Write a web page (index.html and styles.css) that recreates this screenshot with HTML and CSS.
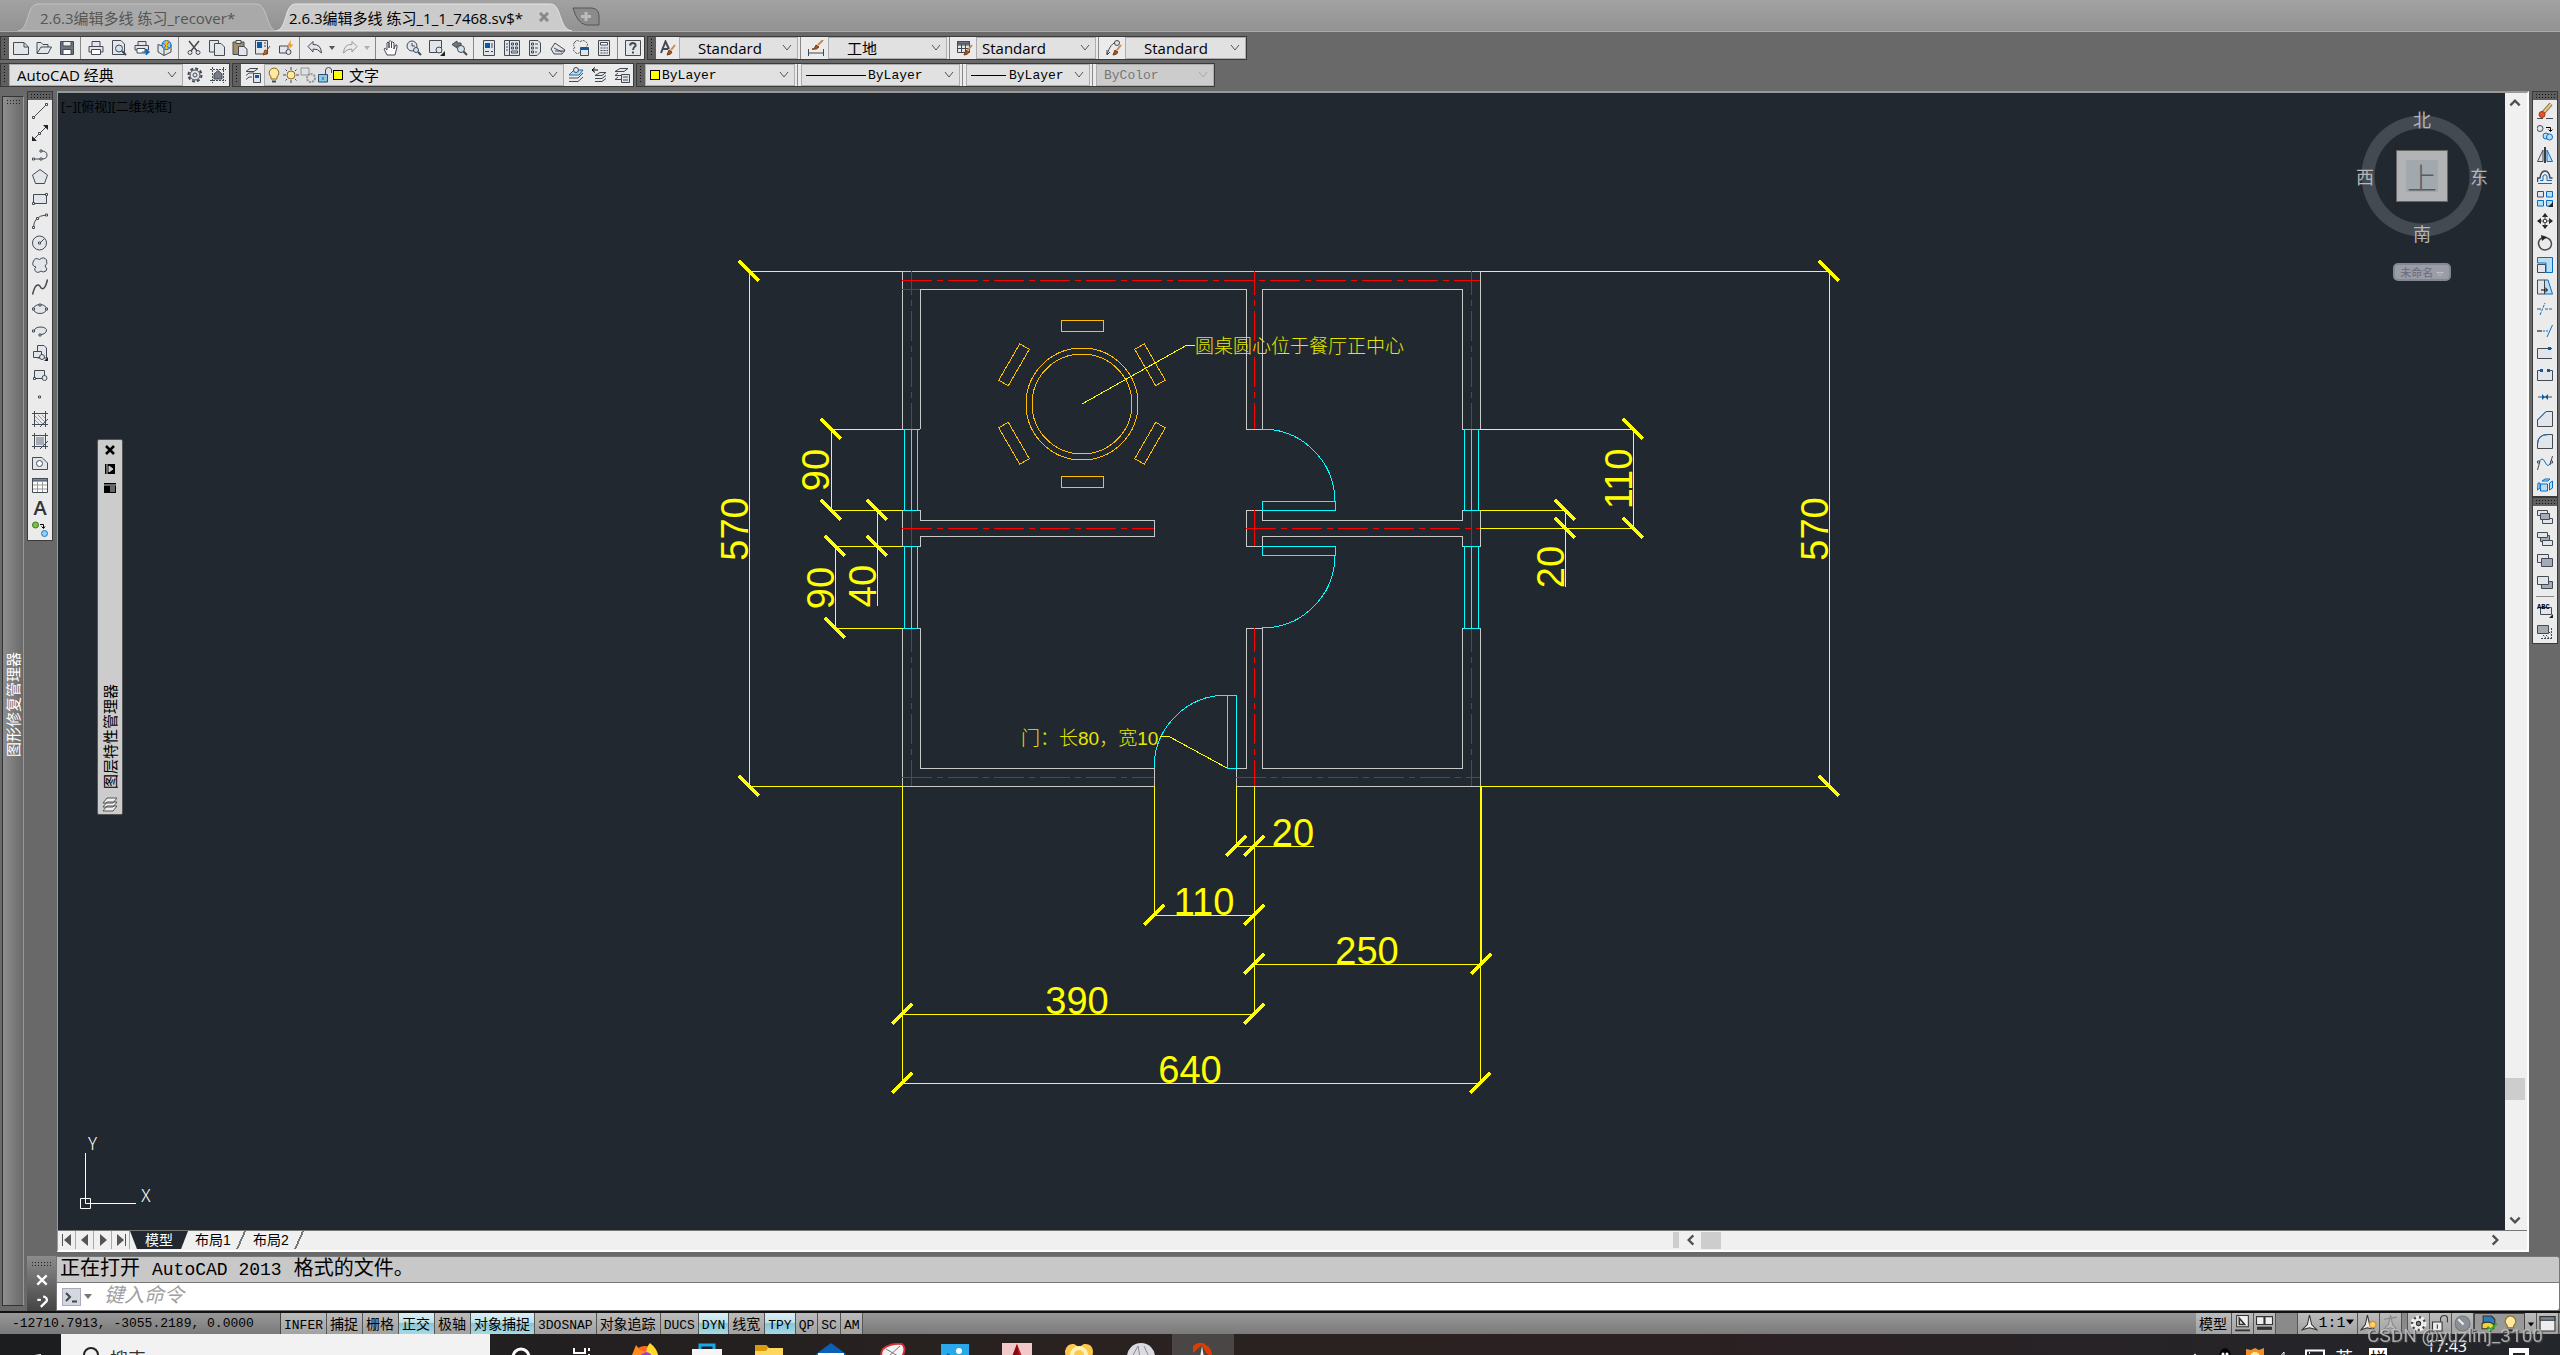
FILE: index.html
```html
<!DOCTYPE html>
<html lang="zh-CN">
<head>
    <meta charset="UTF-8">
    <meta name="viewport" content="width=device-width, initial-scale=1.0">
    <title>AutoCAD 经典</title>
    <link rel="stylesheet" href="styles.css">
</head>
<body>
    <!-- File tabs -->
    <header class="file-tabs">
        <button class="file-tab">
            <svg class="tab-shape" viewBox="0 0 258 28" preserveAspectRatio="none"><path d="M0 28C12 26 8 1 20 1H238C250 1 248 26 258 28Z" fill="#a9a9a9" stroke="#c4c4c4"/></svg>
            <span>2.6.3编辑多线 练习_recover*</span>
        </button>
        <button class="file-tab active">
            <svg class="tab-shape" viewBox="0 0 300 28" preserveAspectRatio="none"><path d="M0 28C12 26 8 1 20 1H278C290 1 286 26 300 28Z" fill="#cbcbcb" stroke="#e6e6e6"/></svg>
            <span>2.6.3编辑多线 练习_1_1_7468.sv$*</span>
            <svg class="tab-close" viewBox="0 0 10 10"><path d="M1 1L9 9M9 1L1 9" stroke="#888" stroke-width="3"/></svg>
        </button>
        <button class="new-tab" aria-label="新建">
            <svg viewBox="0 0 28 20"><path d="M1 1H20Q27 2 27 9V18H14Q5 16 1 1Z" fill="#8b8b8b" stroke="#555"/><path d="M14 5V14M9 9.500H19" stroke="#bbb" stroke-width="3"/></svg>
        </button>
    </header>

    <!-- Toolbars -->
    <div class="toolbars">
        <div class="toolbar-row">
            <div class="toolbar">
                <i class="grip"></i>
                <button aria-label="新建文件"><svg viewBox="0 0 16 16"><path class="f" d="M.5 2.500H11L15.500 7V14.500H.5Z"/><path d="M11 2.500V7H15"/></svg></button>
                <button aria-label="打开"><svg viewBox="0 0 16 16"><path class="f" d="M1 13V2.500H5L7 4.500H12V7"/><path class="f" d="M1 13.500L5 7H15.500L12 13.500Z"/></svg></button>
                <button aria-label="保存"><svg viewBox="0 0 16 16"><path d="M1.500 1.500H14.500V14.500H1.500Z" fill="#6b7480"/><path d="M4 1.500H12V6H4Z" fill="#eee"/><path d="M4 9.500H12V14.500H4Z" fill="#fff"/></svg></button>
                <i class="sep"></i>
                <button aria-label="打印"><svg viewBox="0 0 16 16"><path class="f" d="M4 6V1.500H12V6"/><path class="f" d="M1 6.500H15V12H1Z"/><path d="M3.500 9.500H12.500V14.500H3.500Z" fill="#fff"/></svg></button>
                <button aria-label="打印预览"><svg viewBox="0 0 16 16"><path class="f" d="M1.500 .5H10L13.500 4V14.500H1.500Z"/><circle cx="8" cy="8.500" r="3.500" fill="#cfe3ee"/><path d="M11 11L15 15" stroke-width="2"/></svg></button>
                <button aria-label="发布"><svg viewBox="0 0 16 16"><path class="f" d="M4 5V1.500H12V5M1 5.500H14.500V10H1Z"/><path d="M3 8.500H11V13H3Z" fill="#fff"/><path d="M8 12H12M12 9L15.500 12L12 15Z" fill="#0669c4" stroke="#0669c4"/></svg></button>
                <button aria-label="三维打印"><svg viewBox="0 0 16 16"><path class="f" d="M1 4.500L7 6.500V15.500L1 12ZM7 6.500L14 4.500V12L7 15.500"/><circle cx="9.500" cy="5" r="4.500" fill="#7bcbe8" stroke="#0669c4"/><path d="M6 3L12 8M12 2L7 8" stroke="#d5442a"/><path d="M9.500 .5V9" stroke="#f2c200"/></svg></button>
                <i class="sep"></i>
                <button aria-label="剪切"><svg viewBox="0 0 16 16"><path d="M3 1L11 11M13 1L5 11" stroke-width="1.500"/><circle cx="4" cy="12.500" r="2"/><circle cx="12" cy="12.500" r="2"/></svg></button>
                <button aria-label="复制"><svg viewBox="0 0 16 16"><path class="f" d="M.5 .5H9.500V12H.5Z"/><path class="f" d="M5.500 3.500H12L15.500 7V15.500H5.500Z"/></svg></button>
                <button aria-label="粘贴"><svg viewBox="0 0 16 16"><path d="M1 2H12V14.500H1Z" fill="#a98b66"/><path class="f" d="M4 .5H9V3.500H4ZM6.500 6.500H12L15 9V15.500H6.500Z"/></svg></button>
                <button aria-label="特性匹配"><svg viewBox="0 0 16 16"><path class="f" d="M.5 .5H12.500V14H.5Z"/><path class="bk" d="M2 2H7V8H2Z"/><path d="M9 3H11M9 6H11"/><path d="M8 15L10 10L13 11Q12 15 8 15ZM12 10L15 6" fill="#b86a2c" stroke="#8a4514"/></svg></button>
                <button aria-label="块编辑器"><svg viewBox="0 0 16 16"><path class="f" d="M1.500 6H10V13H1.500Z"/><circle class="f" cx="10.500" cy="12" r="2.500"/><path d="M13 0L9 6H12L10 10L15.500 4.500H12.500Z" fill="#f39a1a" stroke="none"/></svg></button>
                <i class="sep"></i>
                <button aria-label="放弃"><svg viewBox="0 0 16 16"><path class="f" d="M1 6.500L6 1.500V4.500Q14 4 14.500 13Q11 8.500 6 9V12Z"/></svg></button>
                <button class="drop" aria-label="放弃列表"><svg viewBox="0 0 8 16"><path d="M1 6H7L4 10Z" fill="#555" stroke="none"/></svg></button>
                <button class="off" aria-label="重做"><svg viewBox="0 0 16 16"><path d="M15 6.500L10 1.500V4.500Q2 4 1.500 13Q5 8.500 10 9V12Z"/></svg></button>
                <button class="drop off" aria-label="重做列表"><svg viewBox="0 0 8 16"><path d="M1 6H7L4 10Z" fill="#777" stroke="none"/></svg></button>
                <i class="sep"></i>
                <button aria-label="平移"><svg viewBox="0 0 16 16"><path d="M4 15L1 9Q2 7 4 10V3Q5 1 6 3V8V1.500Q7.500 0 8.500 1.500V8V2.500Q10 1 11 3V9L12.500 5Q14.500 4 14 7L12 15Z" fill="#fff"/></svg></button>
                <button aria-label="实时缩放"><svg viewBox="0 0 16 16"><circle class="f" cx="6" cy="6" r="5"/><path d="M6 3V6H9"/><circle cx="10" cy="10" r="2.500" fill="#cfe3ee"/><path d="M12 12L15 15" stroke-width="2"/></svg></button>
                <button aria-label="窗口缩放"><svg viewBox="0 0 16 16"><path class="f" d="M.5 .5H12.500V12.500H.5Z"/><circle class="f" cx="10" cy="10" r="3"/><path class="k" d="M16 11V16H11Z"/></svg></button>
                <button aria-label="缩放上一个"><svg viewBox="0 0 16 16"><path d="M0 4.500L5 1V3H9V6H5V8Z" fill="#777"/><circle cx="9" cy="9" r="3.500" fill="#cfe3ee"/><path d="M11.500 11.500L15 15" stroke-width="2"/></svg></button>
                <i class="sep"></i>
                <button aria-label="特性"><svg viewBox="0 0 16 16"><path class="f" d="M2.500 .5H13.500V15.500H2.500Z"/><path class="bk" d="M4 3H9V8H4Z"/><path d="M4 11.500H8M10 11.500H12M11 3V8"/></svg></button>
                <button aria-label="设计中心"><svg viewBox="0 0 16 16"><path class="f" d="M.5 .5H15.500V15.500H.5Z"/><path d="M5.500 1V15M2 4H4M2 7H4M2 10H4M7.500 3H9.500V5H7.500ZM11.500 3H13.500V5H11.500ZM7.500 7H9.500V9H7.500ZM11.500 7H13.500V9H11.500ZM7.500 11H13.500V13H7.500Z"/></svg></button>
                <button aria-label="工具选项板"><svg viewBox="0 0 16 16"><path class="f" d="M2.500 .5H11L13.500 3V12L10 15.500H2.500Z"/><path d="M4.500 3H6.500V5H4.500ZM4.500 7H6.500V9H4.500ZM4.500 11H6.500V13H4.500ZM8 4H11M8 8H11M8 12H10"/></svg></button>
                <button aria-label="图纸集"><svg viewBox="0 0 16 16"><path class="f" d="M1 9L5 3L15 10L12 14H4Z"/><path d="M4 8L12 12M5 11H15"/></svg></button>
                <button aria-label="标记集"><svg viewBox="0 0 16 16"><path d="M2 2Q4 -1 7 2Q10 -1 13 2Q16 4 13 7M2 2Q-1 5 2 7Q-1 10 2 12Q4 15 7 12" stroke-dasharray="2 1"/><path class="f" d="M7.500 7.500H15.500V15.500H7.500Z"/><path class="bk" d="M7.500 7.500H15.500V10H7.500Z"/></svg></button>
                <button aria-label="计算器"><svg viewBox="0 0 16 16"><path class="f" d="M2.500 .5H13.500V15.500H2.500Z"/><path d="M4.500 2.500H11.500V5H4.500Z" fill="#fff"/><path d="M4.500 8H12M4.500 10.500H12M4.500 13H12" stroke-dasharray="2 1"/></svg></button>
                <i class="sep"></i>
                <button aria-label="帮助"><svg viewBox="0 0 16 16"><path class="f" d="M.5 .5H15.500V15.500H.5Z"/><path d="M5 5.500Q5.500 3 8 3Q11 3.500 10.500 6Q8 7.500 8 10M8 11.500V13.500" stroke-width="2"/></svg></button>
            </div>
            <div class="toolbar">
                <i class="grip"></i>
                <button aria-label="文字样式"><svg viewBox="0 0 16 16"><path d="M1 13L5.500 1.500L9 9M3 9H8" stroke-width="2"/><path d="M7 15L9 10L12 12Q11 15 7 15Z" fill="#a4571f" stroke="#7d3b10"/><path d="M11 10L15 5" stroke="#c98b4a" stroke-width="2"/></svg></button>
                <label class="combo w-text"><select aria-label="文字样式"><option>Standard</option></select><svg viewBox="0 0 10 10"><path d="M1 2L5 7L9 2"/></svg></label>
                <i class="sep"></i>
                <button class="wide" aria-label="标注样式"><svg viewBox="0 0 16 16"><path d="M.5 9V16M15.500 9V16M1 13H15"/><path d="M6 9L8 5L11 7Q9 10 4 9Z" fill="#a4571f" stroke="#7d3b10"/><path d="M10 5L15 0" stroke="#c98b4a" stroke-width="2"/></svg></button>
                <label class="combo w-dim"><select aria-label="标注样式"><option>工地</option></select><svg viewBox="0 0 10 10"><path d="M1 2L5 7L9 2"/></svg></label>
                <i class="sep"></i>
                <button aria-label="表格样式"><svg viewBox="0 0 16 16"><path class="f" d="M.5 1.500H12.500V12.500H.5ZM.5 5H12.500M.5 8.500H12.500M4.500 4V12M8.500 4V12"/><path d="M.5 1.500H12.500V4H.5Z" fill="#6b7480"/><path d="M7 15L9 10L12 12Q11 15 7 15Z" fill="#a4571f" stroke="#7d3b10"/><path d="M11 10L15 5" stroke="#c98b4a" stroke-width="2"/></svg></button>
                <label class="combo w-table"><select aria-label="表格样式"><option>Standard</option></select><svg viewBox="0 0 10 10"><path d="M1 2L5 7L9 2"/></svg></label>
                <i class="sep"></i>
                <button aria-label="多重引线样式"><svg viewBox="0 0 16 16"><circle class="f" cx="11" cy="3" r="2.500"/><path d="M9 3Q5 3 1 14M1 10V15L4 12"/><path d="M7 15L9 10L12 12Q11 15 7 15Z" fill="#a4571f" stroke="#7d3b10"/><path d="M11 10L15 5" stroke="#c98b4a" stroke-width="2"/></svg></button>
                <label class="combo w-leader"><select aria-label="多重引线样式"><option>Standard</option></select><svg viewBox="0 0 10 10"><path d="M1 2L5 7L9 2"/></svg></label>
            </div>
        </div>

        <div class="toolbar-row">
            <div class="toolbar">
                <i class="grip"></i>
                <label class="combo w-space"><select aria-label="工作空间"><option>AutoCAD 经典</option></select><svg viewBox="0 0 10 10"><path d="M1 2L5 7L9 2"/></svg></label>
                <button aria-label="工作空间设置"><svg viewBox="0 0 16 16"><circle cx="8" cy="8" r="6.500" stroke-width="2" stroke-dasharray="3 2"/><circle class="f" cx="8" cy="8" r="5"/><circle cx="8" cy="8" r="2"/></svg></button>
                <button aria-label="我的工作空间"><svg viewBox="0 0 16 16"><path d="M2.500 0V16M13.500 0V16M0 2.500H16M0 13.500H16" stroke-dasharray="2 1"/><path d="M4 12V7L8 3.500L12 7V12Z" fill="#777d86"/></svg></button>
            </div>
            <div class="toolbar">
                <i class="grip"></i>
                <button aria-label="图层特性管理器"><svg viewBox="0 0 16 16"><path class="f" d="M1 4.500L5 1.500H13L9 4.500ZM1 8.500L4 6H9M1 12.500L4 10H7"/><path class="f" d="M8.500 6.500H15.500V15.500H8.500Z"/><path class="bk" d="M10 8H14V11H10Z"/></svg></button>
                <label class="combo w-layer">
                    <svg class="mini" viewBox="0 0 16 16"><path d="M5 10Q2 7 3.500 4Q5 1 8 1Q11 1 12.500 4Q14 7 11 10V12H5Z" fill="#ffe9a0" stroke="#8a6d20"/><path d="M6 14.500H10" stroke-width="2"/></svg>
                    <svg class="mini" viewBox="0 0 16 16"><circle cx="8" cy="8" r="4" fill="#ffe9a0" stroke="#8a6d20"/><path d="M8 0V3M8 13V16M0 8H3M13 8H16M2.500 2.500L4 4M13.500 2.500L12 4M2.500 13.500L4 12M13.500 13.500L12 12"/></svg>
                    <svg class="mini off" viewBox="0 0 16 16"><path d="M1 1H9V8H1Z"/><circle cx="11" cy="11" r="4" stroke-dasharray="2 1" stroke-width="2"/></svg>
                    <svg class="mini" viewBox="0 0 16 16"><path d="M1.500 7.500H10.500V15H1.500Z" fill="#8cc8ec" stroke="#29526e"/><path d="M8.500 7V3Q9 .5 11.500 .5Q14.500 .5 14.500 3V6M6 10V13"/></svg>
                    <i class="swatch"></i>
                    <select aria-label="图层"><option>文字</option></select><svg viewBox="0 0 10 10"><path d="M1 2L5 7L9 2"/></svg>
                </label>
                <button aria-label="置为当前"><svg viewBox="0 0 16 16"><path class="bf" d="M1 8L6 3H15L11 8Z"/><path d="M1 11H10L15 6M1 14.500H10L15 10"/><circle class="f" cx="8" cy="3" r="2.500"/></svg></button>
                <button aria-label="上一个图层"><svg viewBox="0 0 16 16"><path d="M1 3H7M1 3L4 .5M1 3L4 5.500" stroke="#000"/><path class="f" d="M4 8.500L9 5.500H15L11 8.500ZM4 11.500H11L15 8.500M4 14.500H11L15 11.500"/></svg></button>
                <button aria-label="图层状态"><svg viewBox="0 0 16 16"><path class="f" d="M1 4.500L6 1.500H14L10 4.500ZM1 8.500L4 6M1 12.500L4 10M1 12.500H7M1 8.500H7"/><path class="f" d="M7.500 7.500H15.500V15.500H7.500Z"/><path d="M9 10H14M9 13H14"/></svg></button>
            </div>
            <div class="toolbar song">
                <i class="grip"></i>
                <label class="combo w-color"><i class="swatch"></i><select aria-label="颜色"><option>ByLayer</option></select><svg viewBox="0 0 10 10"><path d="M1 2L5 7L9 2"/></svg></label>
                <i class="sep"></i>
                <label class="combo w-ltype"><i class="line"></i><select aria-label="线型"><option>ByLayer</option></select><svg viewBox="0 0 10 10"><path d="M1 2L5 7L9 2"/></svg></label>
                <i class="sep"></i>
                <label class="combo w-lweight"><i class="line short"></i><select aria-label="线宽"><option>ByLayer</option></select><svg viewBox="0 0 10 10"><path d="M1 2L5 7L9 2"/></svg></label>
                <i class="sep"></i>
                <label class="combo w-plot disabled"><select aria-label="打印样式" disabled><option>ByColor</option></select><svg viewBox="0 0 10 10"><path d="M1 2L5 7L9 2"/></svg></label>
            </div>
        </div>
    </div>

    <div class="workspace">
        <aside class="recovery"><i class="dots"></i><span>图形修复管理器</span></aside>

        <div class="center">
            <main class="stage">
                <div class="toolbar vertical draw">
                    <i class="grip"></i>
                    <button aria-label="直线"><svg viewBox="0 0 16 16"><path d="M2 14L14 2"/><path class="w" d="M.5 13.500H2.500V15.500H.5ZM13.500 .5H15.500V2.500H13.500Z"/></svg></button>
                    <button aria-label="构造线"><svg viewBox="0 0 16 16"><path d="M2 14L14 2"/><path class="k" d="M0 16V11L5 16ZM16 0V5L11 0Z"/><path class="w" d="M6.500 7.500H8.500V9.500H6.500Z"/></svg></button>
                    <button aria-label="多段线"><svg viewBox="0 0 16 16"><path d="M1 12H10Q15 12 15 8Q15 4 9 4"/><path class="w" d="M.5 11H2.500V13H.5ZM8 11H10V13H8ZM8 3H10V5H8Z"/></svg></button>
                    <button aria-label="正多边形"><svg viewBox="0 0 16 16"><path class="f" d="M8 .5L15.500 6L12.500 14.500H3.500L.5 6Z"/></svg></button>
                    <button aria-label="矩形"><svg viewBox="0 0 16 16"><path class="f" d="M1.500 3.500H14.500V12.500H1.500Z"/><path class="w" d="M.5 11.500H2.500V13.500H.5ZM13.500 2.500H15.500V4.500H13.500Z"/></svg></button>
                    <button aria-label="圆弧"><svg viewBox="0 0 16 16"><path d="M1.500 14Q2 3 14 2"/><path class="w" d="M.5 13.500H2.500V15.500H.5ZM4.500 4.500H6.500V6.500H4.500ZM13.500 1H15.500V3H13.500Z"/></svg></button>
                    <button aria-label="圆"><svg viewBox="0 0 16 16"><circle class="f" cx="7.500" cy="8" r="7"/><path d="M8 8L12 4"/><path class="w" d="M6.500 7H8.500V9H6.500Z"/></svg></button>
                    <button aria-label="修订云线"><svg viewBox="0 0 16 16"><path class="f" d="M4 10Q-1 9 1.500 4Q3 0 7.500 2.500Q12 -1 14.500 3Q16 7 13 9Q16 12 14 14Q11 16 9 14Q5 17 3 13.500Q2 11 4 10Z"/></svg></button>
                    <button aria-label="样条曲线"><svg viewBox="0 0 16 16"><path d="M.5 15.500Q3 5 6.500 6Q8 6.500 9 9Q13 12 15.500 .5" stroke-width="1.500"/></svg></button>
                    <button aria-label="椭圆"><svg viewBox="0 0 16 16"><ellipse class="f" cx="8" cy="8" rx="6.500" ry="4.500"/><path class="w" d="M.5 7H2.500V9H.5ZM13.500 7H15.500V9H13.500ZM7 3H9V5H7Z"/></svg></button>
                    <button aria-label="椭圆弧"><svg viewBox="0 0 16 16"><path class="f" d="M2 8Q3 4 9 4Q15 4.500 14.500 8Q14 11 8 12"/><path class="w" d="M.5 7H2.500V9H.5ZM7 11H9V13H7Z"/></svg></button>
                    <button aria-label="插入块"><svg viewBox="0 0 16 16"><path class="f" d="M5.500 .5H12L14.500 3V13H5.500Z"/><path class="f" d="M1.500 6.500H9.500V12.500H1.500Z"/><circle class="f" cx="10" cy="12" r="2.500"/><path class="k" d="M16 12V16H12Z"/></svg></button>
                    <button aria-label="创建块"><svg viewBox="0 0 16 16"><path class="f" d="M2.500 3.500H12.500V11.500H2.500Z"/><circle class="f" cx="12.500" cy="11" r="2.500"/><path class="w" d="M1.500 10.500H3.500V12.500H1.500Z"/></svg></button>
                    <button aria-label="点"><svg viewBox="0 0 16 16"><path class="w" d="M6.500 7H8.500V9H6.500Z"/></svg></button>
                    <button aria-label="图案填充"><svg viewBox="0 0 16 16"><path d="M2.500 0V16M13.500 0V16M0 2.500H16M0 13.500H16M16 8L8 16"/><path d="M3 5L11 13M3 9L7 13M6 4L13 11M10 4L13 7" stroke="#999"/></svg></button>
                    <button aria-label="渐变色"><svg viewBox="0 0 16 16"><path d="M4 4H12V12H4Z" fill="#a5abb5" stroke="none"/><path d="M2.500 0V16M13.500 0V16M0 2.500H16M0 13.500H16M16 8L8 16"/></svg></button>
                    <button aria-label="面域"><svg viewBox="0 0 16 16"><path class="f" d="M.5 2.500H10L15.500 8V14.500H.5Z"/><circle cx="7.500" cy="8.500" r="3" fill="#fff"/></svg></button>
                    <button aria-label="表格"><svg viewBox="0 0 16 16"><path d="M.5 1.500H15.500V15.500H.5Z" fill="#fff"/><path d="M.5 1.500H15.500V4H.5Z" fill="#7a8899"/><path d="M1 8H15M1 12H15M5.500 5V15M10.500 5V15" stroke="#999"/></svg></button>
                    <button class="letter">A</button>
                    <button aria-label="添加选定对象"><svg viewBox="0 0 16 16"><circle cx="3.500" cy="4" r="3" fill="#7cbf4c" stroke="#3c7a1c"/><circle cx="12.500" cy="12.500" r="3" fill="#8ed0f8" stroke="#1878c4"/><path d="M8 3.500H11.500V7M9.500 5.500L11.500 7.500L13 5.500" stroke="#000"/></svg></button>
                </div>

                <section class="drawing">
                    <div class="canvas-row">
                        <div class="canvas">
                            <span class="view-label">[−][俯视][二维线框]</span>

                            <svg class="plan" viewBox="58 93 2447 1137">
                                <!-- walls -->
                                <g class="wall">
                                    <path d="M902 429V271H1480V429M920 429V289H1246V429M1262 429V289H1462V429M902 429H920M1246 429H1262M1462 429H1480"/>
                                    <path d="M902 510H920V520H1154V536H920V546H902ZM1246 510H1262V520H1462V510H1480V546H1462V536H1262V546H1246Z"/>
                                    <path d="M902 628V786H1154V768H920V628ZM1246 628H1262V768H1462V628H1480V786H1236V768H1246Z"/>
                                </g>
                                <!-- axes -->
                                <g class="axis">
                                    <path d="M902 280H1480M902 528H1154M1246 528H1480M902 777H1154M1236 777H1480"/>
                                    <path d="M902 289H920M911 271V429M1254 271V429M1471 271V429M911 628V786M1254 628V786M1471 628V786" stroke-dashoffset="6"/>
                                    <path d="M911 510V546M1254 510V546M1471 510V546" stroke-dasharray="none"/>
                                </g>
                                <!-- windows and doors -->
                                <g class="opening">
                                    <path d="M904 429H917V510H904ZM911 429V510M904 546H917V628H904ZM911 546V628M1464 429H1478V510H1464ZM1471 429V510M1464 546H1478V628H1464ZM1471 546V628"/>
                                    <path d="M1262 501H1335V510H1262ZM1262 546H1335V555H1262ZM1227 695H1236V768H1227Z"/>
                                    <path d="M1262 429A73 73 0 0 1 1335 501M1335 555A73 73 0 0 1 1262 628M1227 695A73 73 0 0 0 1154 768"/>
                                </g>
                                <!-- table and chairs -->
                                <g class="furniture">
                                    <circle cx="1082" cy="404" r="56"/>
                                    <circle cx="1082" cy="404" r="50"/>
                                    <rect x="1061" y="320" width="42" height="11"/>
                                    <rect x="1061" y="320" width="42" height="11" transform="rotate(60 1082 404)"/>
                                    <rect x="1061" y="320" width="42" height="11" transform="rotate(120 1082 404)"/>
                                    <rect x="1061" y="476" width="42" height="11"/>
                                    <rect x="1061" y="320" width="42" height="11" transform="rotate(240 1082 404)"/>
                                    <rect x="1061" y="320" width="42" height="11" transform="rotate(300 1082 404)"/>
                                </g>
                                <!-- dimensions -->
                                <g class="dim">
                                    <path d="M749 271V786M749 271H902M749 786H902M831 429V510M831 429H902M831 510H902M877 510V606M835 546V628M835 546H902M835 628H902"/>
                                    <path d="M1480 271H1829V786H1480M1480 429H1633V528M1480 528H1633M1480 510H1565V587"/>
                                    <path d="M902 786V1083M1480 786V1083M1481 786V964M1154 786V915M1236 786V846M1254 786V1014M1236 846H1314M1154 915H1254M1254 964H1480M902 1014H1254M902 1083H1480"/>
                                </g>
                                <g class="tick">
                                    <path d="M739 261l20 20M739 776l20 20M821 419l20 20M821 500l20 20M867 500l20 20M867 536l20 20M825 536l20 20M825 618l20 20"/>
                                    <path d="M1819 261l20 20M1819 776l20 20M1623 419l20 20M1623 518l20 20M1555 500l20 20M1555 518l20 20"/>
                                    <path d="M1226 856l20 -20M1244 856l20 -20M1144 925l20 -20M1244 925l20 -20M1244 974l20 -20M1471 974l20 -20M892 1024l20 -20M1244 1024l20 -20M892 1093l20 -20M1470 1093l20 -20"/>
                                </g>
                                <g class="dim-text">
                                    <text transform="translate(748 529) rotate(-90)">570</text>
                                    <text transform="translate(829 470) rotate(-90)">90</text>
                                    <text transform="translate(834 588) rotate(-90)">90</text>
                                    <text transform="translate(876 586) rotate(-90)">40</text>
                                    <text transform="translate(1828 529) rotate(-90)">570</text>
                                    <text transform="translate(1632 479) rotate(-90)">110</text>
                                    <text transform="translate(1564 567) rotate(-90)">20</text>
                                    <text x="1293" y="846">20</text>
                                    <text x="1204" y="915">110</text>
                                    <text x="1367" y="964">250</text>
                                    <text x="1077" y="1014">390</text>
                                    <text x="1190" y="1083">640</text>
                                </g>
                                <path class="leader" d="M1082 404L1187 345H1195M1227 768L1168 736H1160"/>
                                <g class="note">
                                    <text x="1195" y="353">圆桌圆心位于餐厅正中心</text>
                                    <text x="1021" y="745">门：长80，宽10</text>
                                </g>
                            </svg>

                            <!-- UCS icon -->
                            <svg class="ucs" viewBox="0 0 80 80">
                                <path d="M7.500 20V70.500H58M2.500 65.500H12.500V75.500H2.500Z"/>
                                <text x="10" y="17">Y</text>
                                <text x="63" y="69">X</text>
                            </svg>

                            <div class="viewcube">
                                <div class="compass">
                                    <span class="north">北</span>
                                    <span class="west">西</span>
                                    <button class="cube">上</button>
                                    <span class="east">东</span>
                                    <span class="south">南</span>
                                </div>
                                <button class="ucs-name">未命名 <svg viewBox="0 0 10 6"><path d="M1 1H9L5 5Z"/></svg></button>
                            </div>

                            <!-- docked layer palette -->
                            <div class="layer-palette">
                                <svg viewBox="0 0 12 12"><path d="M2 2L10 10M10 2L2 10" stroke="#000" stroke-width="2.500"/></svg>
                                <svg viewBox="0 0 12 12"><path d="M1 1H11V11H1Z"/><path d="M3 1V11M5 3V9L9 6Z" fill="#ccc" stroke="#ccc"/></svg>
                                <svg viewBox="0 0 12 12"><path d="M0 1H12V11H0Z"/><path d="M0 3H12M6 5H11M6 7H11M6 9H11" stroke="#ccc"/></svg>
                                <span>图层特性管理器</span>
                                <svg class="layers" viewBox="0 0 16 16"><path d="M1 15L5 10H15L11 15ZM1 11L5 6H15L11 11ZM1 7L5 2H15L11 7Z" fill="#eee" stroke="#555"/></svg>
                            </div>
                        </div>
                        <div class="vscroll">
                            <button aria-label="向上"><svg viewBox="0 0 12 12"><path d="M2 8L6 4L10 8"/></svg></button>
                            <i class="thumb"></i>
                            <button aria-label="向下"><svg viewBox="0 0 12 12"><path d="M2 4L6 8L10 4"/></svg></button>
                        </div>
                    </div>
                    <div class="layout-bar">
                        <button class="nav" aria-label="第一个"><svg viewBox="0 0 16 12"><path d="M3.500 0V12"/><path class="g" d="M12 0V12L5 6Z"/></svg></button>
                        <button class="nav" aria-label="上一个"><svg viewBox="0 0 16 12"><path class="g" d="M11 0V12L4 6Z"/></svg></button>
                        <button class="nav" aria-label="下一个"><svg viewBox="0 0 16 12"><path class="g" d="M5 0V12L12 6Z"/></svg></button>
                        <button class="nav" aria-label="最后一个"><svg viewBox="0 0 16 12"><path class="g" d="M4 0V12L11 6Z"/><path d="M12.500 0V12"/></svg></button>
                        <button class="sheet current">模型</button>
                        <button class="sheet">布局1</button>
                        <button class="sheet">布局2</button>
                        <div class="hscroll">
                            <i class="splitter"></i>
                            <button aria-label="向左"><svg viewBox="0 0 12 12"><path d="M8 2L4 6L8 10"/></svg></button>
                            <i class="thumb"></i>
                            <button class="last" aria-label="向右"><svg viewBox="0 0 12 12"><path d="M4 2L8 6L4 10"/></svg></button>
                        </div>
                    </div>
                </section>

                <div class="side-bars">
                    <div class="toolbar vertical modify">
                        <i class="grip"></i>
                        <button aria-label="删除"><svg viewBox="0 0 16 16"><path d="M0 15.500H6M9 15.500H16"/><path d="M6 10L14 1" stroke="#8a6a30" stroke-width="4"/><path d="M6 10L14 1" stroke="#e8c98c" stroke-width="2"/><circle cx="5" cy="11.500" r="3" fill="#e2542a" stroke="#a8360f"/></svg></button>
                        <button aria-label="复制"><svg viewBox="0 0 16 16"><circle class="f" cx="3" cy="3.500" r="3"/><circle class="bf" cx="9" cy="11" r="3"/><circle class="bf" cx="12.500" cy="12" r="3"/><path d="M9 2.500H13.500V6M11.500 4.500L13.500 6.500L15.500 4.500" stroke="#000"/></svg></button>
                        <button aria-label="镜像"><svg viewBox="0 0 16 16"><path class="f" d="M6 3V14.500H.5Z"/><path class="bf" d="M10 3V14.500H15.500Z"/><path d="M8 0V16" stroke="#000" stroke-width="1.500"/></svg></button>
                        <button aria-label="偏移"><svg viewBox="0 0 16 16"><path d="M.5 13V9H3Q4 2 8 2Q12 2 13 9H15.500" stroke-width="1.500"/><path class="b" d="M1 14.500H15M3 11.500H6V7Q8 4 10 7V11.500H15"/></svg></button>
                        <button aria-label="阵列"><svg viewBox="0 0 16 16"><path class="f" d="M.5 .5H6.500V6H.5Z"/><path class="bf" d="M9.500 .5H15.500V6H9.500ZM.5 9.500H6.500V15H.5ZM9.500 9.500H15.500V15H9.500Z"/><path class="k" d="M16 11V16H11Z"/></svg></button>
                        <button aria-label="移动"><svg viewBox="0 0 16 16"><path class="k" d="M8 0L11 4H5ZM8 16L5 12H11ZM0 8L4 5V11ZM16 8L12 11V5Z"/><path d="M8 3V13M3 8H13"/><path class="w" d="M6.500 6.500H9.500V9.500H6.500Z"/></svg></button>
                        <button aria-label="旋转"><svg viewBox="0 0 16 16"><path d="M5 3Q1 5 1.500 9Q3 15 8 15Q14 14.500 14.500 9Q14 3 8 2.500" stroke-width="1.500"/><path class="k" d="M4 0L10 2L5 6Z"/></svg></button>
                        <button aria-label="缩放"><svg viewBox="0 0 16 16"><path class="bf" d="M.5 .5H15.500V15.500H9V6H.5Z"/><path class="f" d="M.5 7.500H8.500V15.500H.5Z"/></svg></button>
                        <button aria-label="拉伸"><svg viewBox="0 0 16 16"><path class="bf" d="M7 1H11L15.500 15H7Z"/><path class="f" d="M.5 1H7.500V15H.5Z"/><path d="M4 11H10M8 8.500L10.500 11L8 13.500" stroke="#000"/></svg></button>
                        <button aria-label="修剪"><svg viewBox="0 0 16 16"><path d="M0 8H4"/><path class="b" d="M3 14L8 2M8 8H16" stroke-dasharray="3 1"/></svg></button>
                        <button aria-label="延伸"><svg viewBox="0 0 16 16"><path d="M0 8H5" stroke="#000"/><path class="b" d="M6 8H11" stroke-dasharray="2 1"/><path class="b" d="M10 14L15.500 2"/></svg></button>
                        <button aria-label="打断于点"><svg viewBox="0 0 16 16"><path class="f" d="M15 3.500H.5V13.500H15"/><path class="bk" d="M11 2H14V5H11Z"/></svg></button>
                        <button aria-label="打断"><svg viewBox="0 0 16 16"><path class="f" d="M3 3.500H.5V13.500H15.500V3.500H13"/><path class="bk" d="M3 2H6V5H3ZM10 2H13V5H10Z"/></svg></button>
                        <button aria-label="合并"><svg viewBox="0 0 16 16"><path d="M1 8H15"/><path class="bk" d="M5 5L8 8L5 11ZM11 5L8 8L11 11Z"/></svg></button>
                        <button aria-label="倒角"><svg viewBox="0 0 16 16"><path class="f" d="M.5 9V15.500H15.500V.5H9Z"/><path class="b" d="M.5 9L9 .5"/></svg></button>
                        <button aria-label="圆角"><svg viewBox="0 0 16 16"><path class="f" d="M.5 11V15.500H15.500V1.500H11Q.5 1.500 .5 11Z"/><path class="b" d="M11 1.500Q1 1.500 .5 11"/></svg></button>
                        <button aria-label="光顺曲线"><svg viewBox="0 0 16 16"><path class="b" d="M2 7Q5 1 8 7Q11 14 14 7"/><path d="M.5 15L3 6M13 10L15.500 1"/><path class="w" d="M.5 6H2.500V8H.5ZM13.500 6H15.500V8H13.500Z"/></svg></button>
                        <button aria-label="分解"><svg viewBox="0 0 16 16"><path class="bf" d="M1 6H3V11L.5 13ZM5 4L8 2H13L11 4ZM3.500 7H10.500V14H3.500ZM12.500 6L15.500 4V11L12.500 13Z"/></svg></button>
                    </div>
                    <div class="toolbar vertical order">
                        <i class="grip"></i>
                        <button aria-label="前置"><svg viewBox="0 0 16 16"><path class="f" d="M.5 1.500H10.500V6.500H.5ZM5.500 9.500H15.500V14.500H5.500Z"/><path class="d" d="M3.500 4.500H12.500V10.500H3.500Z"/></svg></button>
                        <button aria-label="后置"><svg viewBox="0 0 16 16"><path class="d" d="M3.500 4.500H12.500V10.500H3.500Z"/><path class="f" d="M.5 1.500H10.500V6.500H.5ZM5.500 9.500H15.500V14.500H5.500Z"/></svg></button>
                        <button aria-label="置于对象之上"><svg viewBox="0 0 16 16"><path class="f" d="M.5 1.500H11.500V9.500H.5Z"/><path class="d" d="M4.500 5.500H15.500V13.500H4.500Z"/></svg></button>
                        <button aria-label="置于对象之下"><svg viewBox="0 0 16 16"><path class="d" d="M4.500 6.500H15.500V13.500H4.500Z"/><path class="f" d="M.5 1.500H11.500V9.500H.5Z"/></svg></button>
                        <i class="sep"></i>
                        <button aria-label="文字前置"><svg viewBox="0 0 16 16"><path class="f" d="M3.500 5.500H14.500V12.500H3.500Z"/><text x="0" y="7">ABC</text><path class="k" d="M16 12V16H12Z"/></svg></button>
                        <button aria-label="图案填充后置"><svg viewBox="0 0 16 16"><path d="M14.500 4V16M4 14.500H16M6 11L9 14M9 11L12 14M12 8L15 11" stroke-dasharray="2 1"/><path class="d" d="M.5 1.500H11.500V9.500H.5Z"/></svg></button>
                    </div>
                </div>
            </main>

            <!-- Command line -->
            <section class="command">
                <div class="command-handle">
                    <i class="dots"></i>
                    <svg viewBox="0 0 12 12"><path d="M2 2L10 10M10 2L2 10"/></svg>
                    <svg viewBox="0 0 12 12"><path d="M2 5H5M7 2Q11 3 10 6Q8 8 5 11"/></svg>
                </div>
                <div class="command-body">
                    <p class="history">正在打开 <span>AutoCAD 2013</span> 格式的文件。</p>
                    <div class="prompt">
                        <svg class="prompt-icon" viewBox="0 0 19 18"><rect x=".5" y=".5" width="18" height="17" fill="#d3d8e0" stroke="#aab"/><path d="M4 5L8 9L4 13M10 13.500H15" fill="none" stroke="#444" stroke-width="2"/></svg>
                        <svg class="prompt-drop" viewBox="0 0 8 5"><path d="M0 0H8L4 5Z" fill="#777"/></svg>
                        <input type="text" placeholder="键入命令" aria-label="键入命令">
                    </div>
                </div>
            </section>
        </div>
    </div>

    <!-- Status bar -->
    <footer class="status">
        <output class="coords">-12710.7913, -3055.2189, 0.0000</output>
        <div class="toggles">
            <button class="latin">INFER</button><button>捕捉</button><button>栅格</button><button class="on">正交</button><button>极轴</button><button class="on">对象捕捉</button><button class="latin">3DOSNAP</button><button>对象追踪</button><button class="latin">DUCS</button><button class="latin on">DYN</button><button>线宽</button><button class="latin on">TPY</button><button class="latin">QP</button><button class="latin">SC</button><button class="latin">AM</button>
        </div>
        <div class="status-right">
            <button>模型</button>
            <button class="ico" aria-label="布局"><svg viewBox="0 0 16 16"><path d="M2.500 .5H13.500V11H2.500Z" fill="#eee"/><path d="M5 9V3L10 9ZM1 14.500H15" stroke-width="1.500"/></svg></button>
            <button class="ico" aria-label="快速查看"><svg viewBox="0 0 16 16"><path d="M.5 1.500H7.500V9H.5ZM8.500 1.500H15.500V9H8.500Z" fill="#eee"/><path d="M1 12.500H15" stroke-width="3"/></svg></button>
            <i class="blank"></i>
            <button class="scale"><svg viewBox="0 0 16 16"><path d="M8 0L10 9L15 14L8 12L1 14L6 9Z" fill="#eee"/></svg>1:1<svg class="arrow" viewBox="0 0 8 16"><path d="M0 4H8L4 9Z" fill="#000" stroke="none"/></svg></button>
            <button class="ico" aria-label="注释可见性"><svg viewBox="0 0 16 16"><path d="M7 0L9 9L14 14L7 12L1 14L5 9Z" fill="#eee"/><circle cx="12" cy="9" r="3" fill="#ffd070" stroke="#e88a10"/></svg></button>
            <button class="ico" aria-label="自动添加比例"><svg viewBox="0 0 16 16"><path d="M8 0L10 9L15 15L8 12L1 14L6 9ZM2 4L14 2" fill="#bbb" stroke="#888"/></svg></button>
            <i class="blank thin"></i>
            <button class="ico" aria-label="切换工作空间"><svg viewBox="0 0 16 16"><circle cx="8" cy="8" r="7" fill="#444" stroke="none"/><circle cx="8" cy="8" r="6" stroke="#eee" stroke-width="3" stroke-dasharray="3 2"/><circle cx="8" cy="8" r="5" fill="#eee" stroke="none"/><circle cx="8" cy="8" r="2" fill="#888"/></svg></button>
            <button class="ico" aria-label="锁定"><svg viewBox="0 0 16 16"><path d="M.5 6.500H9.500V15H.5Z" fill="#eee"/><path d="M8 6V3Q9 .5 11.500 .5Q14.500 .5 14.500 3V7M5 9V13"/></svg></button>
            <button class="ico" aria-label="硬件加速"><svg viewBox="0 0 16 16"><circle cx="8" cy="8" r="7" fill="#8b9097" stroke="#777"/><path d="M4 4L9 9" stroke="#eee" stroke-width="2"/></svg></button>
            <div class="tray-box">
                <svg viewBox="0 0 16 16"><path d="M2 1H10L13 4V9H2Z" fill="#2d7bb8"/><path d="M1 8Q8 5 12 9V13H1Z" fill="#f3d332"/><path d="M6 11L9 14L15 8" stroke="#2faa2f" stroke-width="2"/></svg>
                <svg viewBox="0 0 16 16"><path d="M5 10Q2 7 3.500 4Q5 1 8 1Q11 1 12.500 4Q14 7 11 10V12H5Z" fill="#ffe9a0" stroke="#8a6d20"/><path d="M6 14.500H10" stroke-width="2"/></svg>
            </div>
            <button class="ico narrow" aria-label="状态栏菜单"><svg viewBox="0 0 8 16"><path d="M1 7H7L4 11Z" fill="#000" stroke="none"/></svg></button>
            <button class="ico" aria-label="全屏显示"><svg viewBox="0 0 16 16"><path d="M1 1.500H15V15H1Z" fill="#eee"/><path d="M1 1.500H15V5H1Z" fill="#7a8899"/></svg></button>
        </div>
    </footer>

    <!-- Windows taskbar -->
    <nav class="taskbar">
        <button class="start" aria-label="开始"><svg viewBox="0 0 20 20"><path d="M0 3L9 2V10H0ZM10 1.500L20 0V10H10ZM0 11H9V19L0 18ZM10 11H20V20L10 19Z" fill="#fff"/></svg></button>
        <label class="search"><svg viewBox="0 0 20 24"><circle cx="10" cy="8" r="7" fill="none" stroke="#222" stroke-width="2"/><path d="M5 13L0 20" stroke="#222" stroke-width="2"/></svg><input type="text" placeholder="搜索" aria-label="搜索"></label>
        <div class="apps">
            <button aria-label="Cortana"><svg viewBox="0 0 30 30"><circle cx="15" cy="14" r="8" fill="none" stroke="#fff" stroke-width="3"/></svg></button>
            <button aria-label="任务视图"><svg viewBox="0 0 30 30"><path d="M6 5V10H17V5M6 13H17V23H6ZM21 5V8M21 11V23" fill="none" stroke="#fff" stroke-width="2"/></svg></button>
            <button aria-label="Firefox"><svg viewBox="0 0 30 30"><circle cx="15" cy="16" r="13" fill="#ff6a1f"/><path d="M20 0Q30 8 28 18L16 13Q16 4 20 0Z" fill="#ffd92e"/><circle cx="16" cy="15" r="6" fill="#9b3fd6"/><path d="M2 12L6 2L10 7L16 9L8 13Z" fill="#ff8a1f"/></svg></button>
            <button aria-label="应用商店"><svg viewBox="0 0 30 30"><path d="M8 6V2H22V6" fill="none" stroke="#18a8e8" stroke-width="3"/><path d="M0 6H30V28H0Z" fill="#f5f5f5"/></svg></button>
            <button aria-label="文件资源管理器"><svg viewBox="0 0 30 30"><path d="M1 2H12L15 5H29V28H1Z" fill="#ffd75e"/><path d="M1 2H12L14 5L12 8H1Z" fill="#d99b0b"/></svg></button>
            <button aria-label="邮件"><svg viewBox="0 0 30 30"><path d="M15 0L30 11V28H0V11Z" fill="#0a5fb8"/><path d="M2 10H28V14L15 20L2 14Z" fill="#fff"/></svg></button>
            <button aria-label="绘图"><svg viewBox="0 0 30 30"><path d="M5 6Q12 0 24 1Q29 5 24 14L14 22L4 18Q2 10 5 6Z" fill="#f4f4f4" stroke="#d42f38" stroke-width="2"/><path d="M8 6L20 13M22 3L10 14" stroke="#777"/></svg></button>
            <button aria-label="图片"><svg viewBox="0 0 30 30"><path d="M1 1H29V28H1Z" fill="#29a9ec"/><circle cx="19" cy="8" r="3" fill="#fff"/><path d="M1 18L8 10L15 16" fill="#0c69ab"/></svg></button>
            <button aria-label="Autodesk"><svg viewBox="0 0 30 30"><path d="M0 0H30V30H0Z" fill="#f1c9c9"/><path d="M15 1L26 28H4Z" fill="#c4151c"/><path d="M15 1L17 14L8 20Z" fill="#7a1015"/></svg></button>
            <button aria-label="心"><svg viewBox="0 0 30 30"><path d="M1 8Q3 0 10 1L15 4L20 1Q28 0 29 8Q29 20 15 28Q1 20 1 8Z" fill="#ffc84a"/><circle cx="15" cy="12" r="7" fill="none" stroke="#fff2b8" stroke-width="4"/></svg></button>
            <button aria-label="头像"><svg viewBox="0 0 30 30"><circle cx="15" cy="14" r="14" fill="#dddbe2"/><path d="M6 14L12 3L14 14M18 3L24 16" fill="none" stroke="#8d8798" stroke-width="1"/></svg></button>
            <button class="running" aria-label="AutoCAD"><svg viewBox="0 0 30 30"><path d="M5 3Q12 -3 18 2Q24 5 24 14L18 10L14 2L5 10Z" fill="#e03c00"/><path d="M14 3L18 26H10Z" fill="#eee"/></svg></button>
        </div>
        <div class="tray">
            <svg viewBox="0 0 20 20"><path d="M6 11L10 7L14 11" fill="none" stroke="#fff" stroke-width="2"/></svg>
            <svg viewBox="0 0 20 20"><ellipse cx="10" cy="9" rx="6" ry="9" fill="#050505"/><circle cx="8" cy="6" r="1.500" fill="#fff"/><circle cx="12" cy="6" r="1.500" fill="#fff"/></svg>
            <svg viewBox="0 0 20 20"><path d="M1 1L6 2L10 0L14 2L19 0V18H1Z" fill="#f2912a"/><circle cx="10" cy="9" r="5" fill="#fff0a8"/></svg>
            <svg viewBox="0 0 20 20"><path d="M1 10H4L9 4V18M12 8Q14 11 12 14" fill="none" stroke="#fff"/></svg>
            <svg viewBox="0 0 20 20"><path d="M1 2.500H19V16H1ZM4 5H5" fill="none" stroke="#fff" stroke-width="2"/></svg>
            <span>英</span>
            <span class="ime">拼</span>
            <time>17:43</time>
            <svg class="notice" viewBox="0 0 20 20"><path d="M0 0H20V16H0Z" fill="#fff"/><path d="M4 6H16" stroke="#222" stroke-width="2"/></svg>
        </div>
    </nav>
    <div class="watermark">CSDN @yuzlinj_3100</div>
</body>
</html>
```
FILE: styles.css
```css
* {
    margin: 0;
    padding: 0;
    box-sizing: border-box;
}

body {
    height: 100vh;
    display: flex;
    flex-direction: column;
    background: #696969;
    color: #000;
    font-family: "Open Sans", "Noto Sans CJK SC", sans-serif;
    font-size: 15px;
    overflow: hidden;
}

button,
input,
select {
    font: inherit;
    color: inherit;
    background: none;
    border: none;
    outline: none;
}

/* File tabs */
.file-tabs {
    height: 32px;
    flex-shrink: 0;
    display: flex;
    align-items: flex-end;
    padding-left: 18px;
    background: linear-gradient(#a2a2a2, #929292);
    border-bottom: 1px solid #aaa;
}

.file-tab {
    position: relative;
    display: flex;
    align-items: center;
    width: 258px;
    height: 28px;
    padding-left: 22px;
    color: #555;
    white-space: nowrap;
}

.file-tab.active {
    width: 296px;
    padding-left: 13px;
    color: #000;
}

.file-tab span {
    position: relative;
}

.tab-shape {
    position: absolute;
    inset: 0;
    width: 100%;
    height: 100%;
}

.tab-close {
    position: relative;
    width: 10px;
    height: 10px;
    margin-left: 16px;
}

.new-tab svg {
    display: block;
    width: 28px;
    height: 20px;
    margin-bottom: 4px;
}

/* Toolbars */
.toolbars {
    display: flex;
    flex-direction: column;
    gap: 3px;
    padding: 4px 0 3px;
    flex-shrink: 0;
}

.toolbar-row {
    display: flex;
    gap: 2px;
}

.toolbar {
    display: flex;
    height: 24px;
    background: #ebebeb;
    border: 1px solid #3a3a3a;
}

.toolbar svg {
    display: block;
    width: 16px;
    height: 16px;
    flex-shrink: 0;
    fill: none;
    stroke: #444a54;
}

.toolbar svg .f {
    fill: #e2e5ea;
}

.toolbar svg .w {
    fill: #fff;
}

.toolbar svg .d {
    fill: #a5abb5;
}

.toolbar svg .b {
    stroke: #0a6cc4;
}

.toolbar svg .bf {
    fill: #b9def2;
    stroke: #0a6cc4;
}

.toolbar svg .bk {
    fill: #0a5aa8;
    stroke: none;
}

.toolbar svg .k {
    fill: #222;
    stroke: none;
}

.toolbar button {
    width: 23px;
    display: flex;
    align-items: center;
    justify-content: center;
    flex-shrink: 0;
}

.toolbar button.wide {
    width: 24px;
}

.toolbar button.drop {
    width: 12px;
}

.toolbar button.drop svg {
    width: 8px;
}

.toolbar .off {
    opacity: 0.5;
}

.grip {
    width: 8px;
    background: radial-gradient(circle, #111 1px, transparent 1px) 0 2px / 3px 3px #5f5f5f;
    border: 2px solid #5f5f5f;
    flex-shrink: 0;
}

.sep {
    width: 6px;
    border-left: 2px solid #ebebeb;
    border-right: 3px solid #ebebeb;
    background: #888;
    flex-shrink: 0;
}

.combo {
    display: flex;
    align-items: center;
    background: #e1e1e1;
    border: 1px solid #adadad;
    padding-right: 5px;
}

.combo select {
    flex: 1;
    min-width: 0;
    appearance: none;
}

.combo > svg:last-child {
    width: 10px;
    height: 10px;
    stroke: #555;
}

.combo.disabled {
    background: #ccc;
    color: #777;
}

.combo.disabled select {
    opacity: 1;
}

.combo.disabled > svg:last-child {
    stroke: #aaa;
}

.combo .mini {
    width: 16px;
    margin-left: 1px;
}

.w-text {
    width: 119px;
    padding-left: 18px;
}

.w-dim {
    width: 119px;
    padding-left: 18px;
}

.w-table {
    width: 120px;
    padding-left: 5px;
}

.w-leader {
    width: 121px;
    padding-left: 18px;
}

.w-space {
    width: 174px;
    padding-left: 7px;
}

.w-layer {
    width: 300px;
}

.w-layer .swatch {
    margin-right: 6px;
}

.w-color {
    width: 150px;
    padding-left: 4px;
}

.w-color .swatch {
    margin-right: 2px;
}

.w-ltype {
    width: 159px;
    padding-left: 4px;
}

.w-lweight {
    width: 124px;
    padding-left: 4px;
}

.w-plot {
    width: 118px;
    padding-left: 7px;
}

.swatch {
    width: 10px;
    height: 10px;
    background: #ff0;
    border: 1px solid #000;
}

.line {
    width: 60px;
    height: 1px;
    margin-right: 2px;
    background: #000;
}

.line.short {
    width: 35px;
    margin-right: 3px;
}

.song {
    font-family: "Liberation Mono", "Noto Sans CJK SC", monospace;
    font-size: 13px;
}

/* Vertical toolbars */
.toolbar.vertical {
    flex-direction: column;
    align-items: center;
    width: 26px;
    height: auto;
}

.vertical .grip {
    width: 24px;
    height: 8px;
}

.vertical button {
    width: 24px;
    height: 22px;
}

.vertical .sep {
    width: 18px;
    height: 5px;
    border: solid #ebebeb;
    border-width: 2px 0;
}

.vertical text {
    font: bold 7px "Liberation Mono", monospace;
    fill: #000;
    stroke: none;
}

.letter {
    color: #333;
    font-size: 20px;
    font-weight: 600;
}

/* Workspace */
.workspace {
    flex: 1;
    min-height: 0;
    display: flex;
}

.recovery {
    width: 22px;
    margin: 6px 3px 5px 2px;
    display: flex;
    flex-direction: column;
    align-items: center;
    justify-content: center;
    background: linear-gradient(90deg, #8e8e8e, #6a6a6a);
    border: 1px solid #333;
    border-right-color: #999;
    color: #fff;
}

.recovery .dots {
    width: 14px;
}

.recovery span {
    margin: auto;
    writing-mode: vertical-rl;
    transform: rotate(180deg);
    text-orientation: sideways;
    line-height: 20px;
}

.dots {
    width: 22px;
    height: 5px;
    margin-top: 2px;
    background: radial-gradient(circle, #222 1px, transparent 1px) 0 0 / 3px 3px;
}

.center {
    flex: 1;
    min-width: 0;
    display: flex;
    flex-direction: column;
}

.stage {
    flex: 1;
    min-height: 0;
    display: flex;
    align-items: flex-start;
    padding: 1px 2px 4px 0;
}

.draw {
    margin-right: 4px;
}

.drawing {
    flex: 1;
    min-width: 0;
    align-self: stretch;
    display: flex;
    flex-direction: column;
    border: 1px solid #999;
    border-top-width: 2px;
    border-right: 2px solid #fff;
    border-bottom: 2px solid #fff;
    margin-right: 3px;
}

.canvas-row {
    flex: 1;
    min-height: 0;
    display: flex;
}

.canvas {
    position: relative;
    flex: 1;
    min-width: 0;
    background: #212830;
}

.view-label {
    position: absolute;
    left: 3px;
    top: 4px;
    font-size: 13px;
    line-height: 18px;
}

.plan {
    display: block;
    width: 100%;
    height: 100%;
}

.plan path,
.plan circle,
.plan rect {
    fill: none;
    shape-rendering: crispEdges;
}

.wall {
    stroke: #c8c8c8;
}

.axis {
    stroke: #f00;
    stroke-dasharray: 30 5 6 5;
}

.opening {
    stroke: #0ff;
}

.furniture {
    stroke: #ffbf00;
}

.dim,
.leader {
    stroke: #ff0;
}

.tick {
    stroke: #ff0;
    stroke-width: 3;
}

.dim-text {
    fill: #ff0;
    font: 38px "Liberation Sans", sans-serif;
    text-anchor: middle;
}

.note {
    fill: #e6e600;
    font: 19px "Liberation Sans", "Noto Sans CJK SC", sans-serif;
    font-weight: 300;
}

.ucs {
    position: absolute;
    left: 20px;
    bottom: 17px;
    width: 80px;
    height: 80px;
    overflow: visible;
    fill: none;
    stroke: #fff;
}

.ucs text {
    font: 300 18px "Noto Sans CJK SC", sans-serif;
    fill: #fff;
    stroke: none;
}

/* View cube */
.viewcube {
    position: absolute;
    top: 16px;
    right: 16px;
    width: 134px;
    display: flex;
    flex-direction: column;
    align-items: center;
    font-family: "Noto Sans CJK SC", sans-serif;
}

.compass {
    width: 134px;
    height: 134px;
    display: grid;
    grid-template-columns: 20px 1fr 20px;
    grid-template-rows: 20px 1fr 20px;
    place-items: center;
    line-height: 20px;
    font-size: 18px;
    color: #b4b6b8;
    background: radial-gradient(circle, transparent 47px, #434a52 48px, #434a52 60px, transparent 61px);
}

.north {
    grid-area: 1 / 2;
}

.west {
    grid-area: 2 / 1;
}

.cube {
    grid-area: 2 / 2;
    width: 52px;
    height: 52px;
    background: linear-gradient(#a1a8ae, #a1a8ae) center / 32px 32px no-repeat #b1b3b5;
    border: 1px solid #666;
    color: #555d66;
    font-size: 30px;
    font-weight: 300;
    line-height: 32px;
}

.east {
    grid-area: 2 / 3;
}

.south {
    grid-area: 3 / 2;
}

.ucs-name {
    width: 58px;
    height: 18px;
    margin-top: 20px;
    background: #9a9ca8;
    border: 2px solid #858893;
    border-radius: 5px;
    color: #686a78;
    font-size: 11px;
    line-height: 12px;
}

.ucs-name svg {
    width: 8px;
    height: 6px;
    fill: none;
    stroke: #ccc;
}

/* Layer palette */
.layer-palette {
    position: absolute;
    left: 39px;
    top: 346px;
    width: 26px;
    height: 376px;
    display: flex;
    flex-direction: column;
    align-items: center;
    gap: 7px;
    padding: 4px 0 2px;
    background: #ccc;
    border: 1px solid #555;
    border-radius: 2px;
    font-size: 15px;
}

.layer-palette svg {
    width: 12px;
    height: 12px;
    flex-shrink: 0;
}

.layer-palette span {
    margin-top: auto;
    writing-mode: vertical-rl;
    transform: rotate(180deg);
    text-orientation: sideways;
    line-height: 20px;
}

.layer-palette .layers {
    width: 16px;
    height: 16px;
}

/* Scrollbars */
.vscroll {
    width: 22px;
    display: flex;
    flex-direction: column;
    background: #f0f0f0;
}

.vscroll button,
.hscroll button {
    width: 20px;
    height: 20px;
    display: flex;
    align-items: center;
    justify-content: center;
}

.vscroll svg,
.hscroll svg {
    width: 14px;
    height: 14px;
    fill: none;
    stroke: #505050;
    stroke-width: 2;
}

.vscroll .thumb {
    width: 20px;
    height: 22px;
    margin: auto 0 110px;
    background: #cdcdcd;
}

.layout-bar {
    height: 20px;
    display: flex;
    background: #f0f0f0;
    border-top: 1px solid #777;
}

.nav {
    width: 18px;
    height: 18px;
    display: flex;
    align-items: center;
    justify-content: center;
    border-right: 1px solid #aaa;
}

.nav svg {
    width: 16px;
    height: 12px;
    stroke: #555;
}

.nav .g {
    fill: #555;
    stroke: none;
}

.sheet {
    width: 58px;
    height: 18px;
    padding-right: 8px;
    background: linear-gradient(114deg, transparent 85%, #777 85%, #777 88%, transparent 88%);
    font-family: "Liberation Sans", "Noto Sans CJK SC", sans-serif;
    font-size: 14px;
    line-height: 17px;
}

.sheet.current {
    padding-right: 0;
    background: #212830;
    clip-path: polygon(0 0, 100% 0, 88% 100%, 12% 100%);
    color: #fff;
}

.hscroll {
    width: 855px;
    height: 18px;
    margin-left: auto;
    display: flex;
    align-items: center;
}

.splitter {
    width: 6px;
    height: 16px;
    margin: 0 2px 0 1px;
    background: #cdcdcd;
}

.hscroll .thumb {
    width: 20px;
    height: 17px;
    background: #cdcdcd;
}

.hscroll .last {
    margin: 0 22px 0 auto;
}

.side-bars {
    display: flex;
    flex-direction: column;
}

/* Command line */
.command {
    display: flex;
    height: 55px;
    flex-shrink: 0;
    font-family: "Liberation Mono", "Noto Sans CJK SC", monospace;
    font-size: 20px;
}

.command-handle {
    width: 29px;
    display: flex;
    flex-direction: column;
    align-items: center;
    gap: 7px;
    padding-top: 3px;
    background: linear-gradient(#8c8c8c, #444);
    overflow: hidden;
}

.command-handle svg {
    width: 14px;
    height: 14px;
    flex-shrink: 0;
    fill: none;
    stroke: #fff;
    stroke-width: 2;
}

.command-body {
    flex: 1;
    border: 1px solid #777;
    border-radius: 0 3px 3px 0;
    overflow: hidden;
}

.history {
    height: 26px;
    padding-left: 3px;
    line-height: 26px;
    background: #c8c8c8;
    border-bottom: 1px solid #777;
    white-space: pre;
}

.history span {
    font-size: 18px;
}

.prompt {
    height: 27px;
    display: flex;
    align-items: center;
    padding-left: 5px;
    background: #fff;
}

.prompt-icon {
    width: 19px;
    height: 18px;
    margin-right: 3px;
}

.prompt-drop {
    width: 8px;
    height: 5px;
    margin-right: 12px;
}

.prompt input {
    flex: 1;
    font-style: italic;
}

.prompt input::placeholder {
    color: #a0a0a0;
}

/* Status bar */
.status {
    height: 23px;
    flex-shrink: 0;
    display: flex;
    background: linear-gradient(#989898, #7a7a7a);
    border-top: 2px solid #111;
    font-family: "Liberation Mono", "Noto Sans CJK SC", monospace;
    font-size: 14px;
}

.coords {
    width: 281px;
    padding-left: 12px;
    font-size: 13px;
    line-height: 22px;
    border-right: 1px solid #444;
}

.toggles,
.status-right {
    display: flex;
}

.status-right {
    margin-left: auto;
    padding-right: 1px;
}

.status button {
    padding: 4px 4px 0 3px;
    line-height: 17px;
    background: linear-gradient(#bcbcbc, #a2a2a2);
    border-right: 1px solid #555;
    border-left: 0;
    overflow: hidden;
}

.status .latin {
    padding: 4px 3px 0;
    font-size: 13px;
}

.status .on {
    background: linear-gradient(#d9f0f6 0, #bfe1ea 45%, #8cc4d4 50%, #a4dae6);
}

.status svg {
    width: 17px;
    height: 17px;
    flex-shrink: 0;
    fill: none;
    stroke: #333;
}

.status .ico,
.status .scale,
.tray-box {
    display: flex;
    align-items: center;
    justify-content: center;
    width: 22px;
    padding: 0;
}

.status .scale {
    width: 60px;
    font-size: 15px;
}

.status .arrow,
.status .narrow svg {
    width: 8px;
}

.status .narrow {
    width: 12px;
}

.blank {
    width: 22px;
    background: #8a8a8a;
    border-right: 1px solid #555;
}

.blank.thin {
    width: 6px;
}

.tray-box {
    width: 51px;
    gap: 4px;
    background: #999;
    border: 1px solid #444;
}

/* Taskbar */
.taskbar {
    height: 21px;
    flex-shrink: 0;
    display: flex;
    align-items: flex-start;
    overflow: hidden;
    background: linear-gradient(90deg, #1c1d1f, #2a2221 45%, #2b2022 65%, #23262b);
    color: #fff;
}

.start {
    width: 61px;
    height: 40px;
}

.start svg {
    width: 20px;
    height: 20px;
    margin-top: 20px;
}

.search {
    width: 429px;
    height: 40px;
    display: flex;
    padding: 13px 0 0 20px;
    background: #f2f2f2;
}

.search svg {
    width: 20px;
    height: 24px;
    margin-right: 9px;
}

.search input {
    height: 24px;
    font-size: 18px;
    line-height: 24px;
}

.search input::placeholder {
    color: #333;
}

.apps {
    display: flex;
}

.apps button {
    width: 62px;
    height: 40px;
    padding-top: 9px;
}

.apps svg {
    width: 30px;
    height: 30px;
}

.apps .running {
    background: #4a4645;
}

.tray {
    margin-left: auto;
    display: flex;
    gap: 10px;
    padding: 14px 31px 0 0;
    font-size: 18px;
    line-height: 20px;
}

.tray svg {
    width: 20px;
    height: 20px;
}

.tray time {
    margin-top: -12px;
    margin-left: 29px;
    font-size: 16px;
}

.tray .ime {
    width: 18px;
    height: 20px;
    margin-left: 6px;
    background: #fff;
    color: #000;
    font-size: 16px;
    text-align: center;
}

.tray .notice {
    margin-left: 32px;
}

.watermark {
    position: fixed;
    right: 17px;
    bottom: 7px;
    color: rgba(200, 200, 200, 0.8);
    font: 19px/24px Roboto, sans-serif;
    text-shadow: 1px 1px 1px #444;
}
```
